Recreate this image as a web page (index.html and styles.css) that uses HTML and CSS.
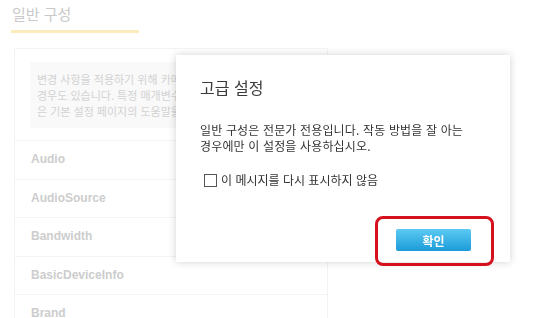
FILE: index.html
```html
<!DOCTYPE html>
<html lang="ko">
<head>
  <meta charset="UTF-8" />
  <title>일반 구성</title>
  <meta name="viewport" content="width=device-width, initial-scale=1.0" />
  <link rel="stylesheet" href="styles.css">
</head>
<body>
  <div class="page">
    <h2 class="page-title">일반 구성</h2>

    <div class="panel">
      <div class="notice">
        변경 사항을 적용하기 위해 카메라를 다시 시작해야 하는<br>
        경우도 있습니다. 특정 매개변수에 대한 자세한 내용<br>
        은 기본 설정 페이지의 도움말을 참조하십시오.
      </div>
      <ul class="group-list">
        <li>Audio</li>
        <li>AudioSource</li>
        <li>Bandwidth</li>
        <li>BasicDeviceInfo</li>
        <li>Brand</li>
      </ul>
    </div>
  </div>

  <!-- Advanced settings dialog -->
  <div class="dialog">
    <h3 class="dialog-title">고급 설정</h3>
    <p class="dialog-text">일반 구성은 전문가 전용입니다. 작동 방법을 잘 아는<br>경우에만 이 설정을 사용하십시오.</p>
    <label class="dialog-check">
      <span class="box"></span>
      이 메시지를 다시 표시하지 않음
    </label>
    <div class="dialog-actions">
      <button class="btn-ok">확인</button>
    </div>
  </div>

  <div class="highlight"></div>
</body>
</html>
```

FILE: styles.css
```css
body {
  margin: 0;
  background: #fff;
  font-family: "Noto Sans CJK KR", "Noto Sans", sans-serif;
  overflow: hidden;
}

.page {
  padding: 3px 0 0 11px;
}

.page-title {
  margin: 0;
  font-size: 15px;
  font-weight: normal;
  color: #c9c9c9;
  width: 127px;
  padding: 0 0 5px 1px;
  line-height: 22px;
  border-bottom: 3px solid #fcebbd;
}

.panel {
  margin: 15px 0 0 3px;
  width: 312px;
  border: 1px solid #f3f3f3;
  border-bottom: none;
}

.notice {
  margin: 13px 15px 12px 15px;
  background: #f9f9f9;
  padding: 9px 7px;
  height: 48px;
  font-size: 11px;
  line-height: 16px;
  color: #d2d2d2;
  white-space: nowrap;
  overflow: hidden;
}

.group-list {
  list-style: none;
  margin: 0;
  padding: 0;
}

.group-list li {
  height: 37.5px;
  line-height: 37.5px;
  border-top: 1px solid #f3f3f3;
  padding-left: 16px;
  font-family: "Liberation Sans", Arial, sans-serif;
  font-size: 12px;
  font-weight: bold;
  color: #cdcdcd;
}

.dialog {
  position: fixed;
  left: 176px;
  top: 55px;
  width: 334px;
  height: 207px;
  box-sizing: border-box;
  padding: 21px 24px 0 24px;
  background: #fff;
  box-shadow: 0 0 8px rgba(0, 0, 0, 0.18);
  color: #333;
  display: flex;
  flex-direction: column;
}

.dialog-title {
  margin: 0;
  font-size: 16px;
  font-weight: normal;
  line-height: 22px;
  color: #3a3a3a;
}

.dialog-text {
  margin: 24px 0 0 0;
  font-size: 12px;
  line-height: 16px;
  letter-spacing: 0.15px;
}

.dialog-check {
  margin: 18px 0 0 4px;
  display: flex;
  align-items: center;
  gap: 4px;
  font-size: 12px;
  line-height: 16px;
}

.dialog-check .box {
  width: 11px;
  height: 11px;
  border: 1px solid #555;
  background: #fff;
}

.dialog-actions {
  display: flex;
  justify-content: flex-end;
  margin-top: 41px;
  padding-right: 15px;
}

.btn-ok {
  width: 75px;
  height: 22px;
  border: none;
  border-radius: 2px;
  background: linear-gradient(#5ccaf3, #1b9bd8);
  color: #fff;
  font-family: "Noto Sans CJK KR", sans-serif;
  font-size: 12px;
  font-weight: bold;
  padding: 0;
  cursor: pointer;
}

.highlight {
  position: fixed;
  left: 375px;
  top: 216px;
  width: 113px;
  height: 44px;
  border: 3px solid #d4111d;
  border-radius: 8px;
}
```
